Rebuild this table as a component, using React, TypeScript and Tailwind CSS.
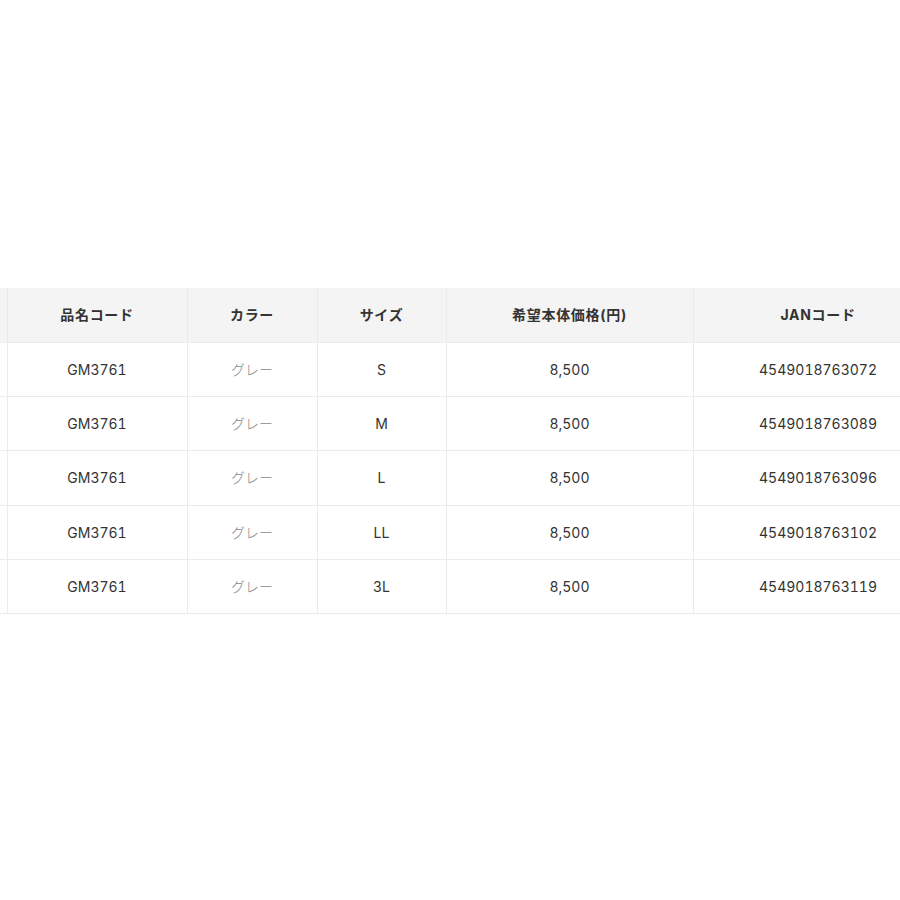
import React from "react";

const rows = [
  { code: "GM3761", color: "グレー", size: "S", price: "8,500", jan: "4549018763072" },
  { code: "GM3761", color: "グレー", size: "M", price: "8,500", jan: "4549018763089" },
  { code: "GM3761", color: "グレー", size: "L", price: "8,500", jan: "4549018763096" },
  { code: "GM3761", color: "グレー", size: "LL", price: "8,500", jan: "4549018763102" },
  { code: "GM3761", color: "グレー", size: "3L", price: "8,500", jan: "4549018763119" },
];

const font = { fontFamily: 'Inter, "Noto Sans CJK JP", sans-serif' };

export default function App() {
  return (
    <div className="w-[900px] h-[900px] overflow-hidden bg-white pt-[288px]" style={font}>
      <table className="table-fixed border-collapse w-[943px] text-[14px] text-[#333]">
        <colgroup>
          <col className="w-[7px]" />
          <col className="w-[180px]" />
          <col className="w-[130px]" />
          <col className="w-[129px]" />
          <col className="w-[247px]" />
          <col className="w-[250px]" />
        </colgroup>
        <thead>
          <tr className="h-[54px] bg-[#f4f4f4]">
            <th className="border border-[#ebebeb] border-t-0 border-l-0 p-0"></th>
            {["品名コード", "カラー", "サイズ", "希望本体価格(円)", "JANコード"].map((h) => (
              <th key={h} className="border border-[#ebebeb] border-t-0 p-0 text-center font-bold text-[#333] tracking-[0.7px]">
                {h}
              </th>
            ))}
          </tr>
        </thead>
        <tbody className="tabular-nums">
          {rows.map((r) => (
            <tr key={r.jan} className="h-[54.4px]">
              <td className="border border-[#ebebeb] border-l-0 p-0"></td>
              <td className="border border-[#ebebeb] p-0 text-center">{r.code}</td>
              <td className="border border-[#ebebeb] p-0 text-center text-[#888] font-light">{r.color}</td>
              <td className="border border-[#ebebeb] p-0 text-center">{r.size}</td>
              <td className="border border-[#ebebeb] p-0 text-center">{r.price}</td>
              <td className="border border-[#ebebeb] p-0 text-center">{r.jan}</td>
            </tr>
          ))}
        </tbody>
      </table>
    </div>
  );
}
